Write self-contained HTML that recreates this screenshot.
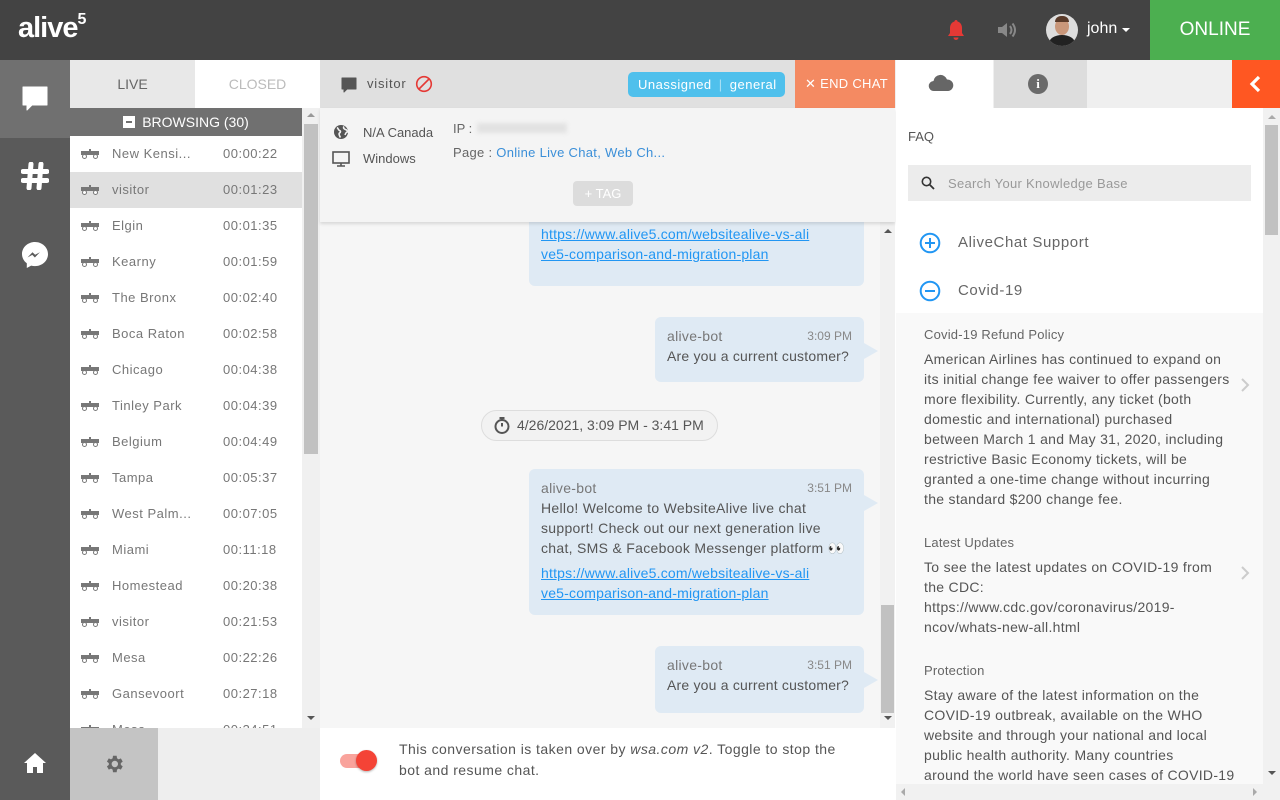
<!DOCTYPE html>
<html><head><meta charset="utf-8"><style>
*{box-sizing:border-box;margin:0;padding:0}
body{width:1280px;height:800px;overflow:hidden;font-family:"Liberation Sans",sans-serif;color:#555;background:#fff;position:relative}
.a{position:absolute}
.row{position:absolute;left:70px;width:232px;height:36px;font-size:13px;color:#777;letter-spacing:.5px;background:#fff;overflow:hidden}
.row .n{position:absolute;left:42px;top:10px}
.row .t{position:absolute;left:153px;top:10px}
.row svg{position:absolute;left:11px;top:13px}
.bub{position:absolute;background:#dfeaf4;border-radius:6px;font-size:14px;color:#555;line-height:20px;letter-spacing:.3px}
.bub:after{content:"";position:absolute;right:-14px;top:26px;border:8px solid transparent;border-left:14px solid #dfeaf4;border-right:0}
.bub .nm{color:#777}
.bub .tm{position:absolute;right:12px;font-size:12px;color:#888;letter-spacing:0}
.lk{color:#2196f3;text-decoration:underline;letter-spacing:.2px}
.faq{font-size:14px;line-height:20px;color:#555;letter-spacing:.3px}
</style></head><body>
<!-- top bar -->
<div class="a" style="left:0;top:0;width:1280px;height:60px;background:#434343"></div>
<div class="a" style="left:18px;top:12px;color:#fff;font-size:29px;font-weight:bold;letter-spacing:-1px">alive<sup style="font-size:16px;position:relative;top:-2px">5</sup></div>
<svg class="a" style="left:946px;top:19px" width="20" height="22" viewBox="0 0 20 22"><path d="M10 1c-1 0-1.5.7-1.5 1.5C5.5 3.3 4 6 4 9v5l-2 3h16l-2-3V9c0-3-1.5-5.7-4.5-6.5C11.5 1.7 11 1 10 1zM7.5 18.5a2.5 2.5 0 0 0 5 0z" fill="#e53935"/></svg>
<svg class="a" style="left:996px;top:20px" width="22" height="20" viewBox="0 0 22 20"><path d="M2 7h4l5-4v14l-5-4H2z" fill="#888"/><path d="M14 6q3 4 0 8M16.5 3.5q5 6.5 0 13" stroke="#888" stroke-width="2" fill="none"/></svg>
<div class="a" style="left:1046px;top:14px;width:32px;height:32px;border-radius:50%;background:#ddd;overflow:hidden"><div class="a" style="left:9px;top:4px;width:14px;height:17px;border-radius:50%;background:#c9977a"></div><div class="a" style="left:9px;top:2px;width:14px;height:6px;border-radius:6px 6px 0 0;background:#5a3b2a"></div><div class="a" style="left:3px;top:21px;width:26px;height:16px;border-radius:50%;background:#222"></div></div>
<div class="a" style="left:1087px;top:20px;color:#fff;font-size:16px">john</div>
<div class="a" style="left:1122px;top:28px;border:4px solid transparent;border-top:4px solid #fff"></div>
<div class="a" style="left:1150px;top:0;width:130px;height:60px;background:#4caf50;color:#fff;font-size:19px;text-align:center;line-height:60px">ONLINE</div>

<!-- left nav -->
<div class="a" style="left:0;top:60px;width:70px;height:740px;background:#5a5a5a"></div>
<div class="a" style="left:0;top:60px;width:70px;height:78px;background:#707070"></div>
<svg class="a" style="left:20px;top:84px" width="30" height="30" viewBox="0 0 30 30"><path d="M3 3h24v18H12l-5 5v-5H3z" fill="#fff" stroke="#fff" stroke-width="1" stroke-linejoin="round"/></svg>
<svg class="a" style="left:21px;top:162px" width="28" height="28" viewBox="0 0 28 28"><path d="M10 2l-2 24M20 2l-2 24M2 9.5h24M2 18.5h24" stroke="#fff" stroke-width="5" stroke-linecap="round"/></svg>
<svg class="a" style="left:20px;top:240px" width="30" height="30" viewBox="0 0 30 30"><path d="M15 2C7.8 2 2 7.4 2 14c0 3.8 1.9 7.1 4.8 9.3V28l4.4-2.4c1.2.3 2.5.5 3.8.5 7.2 0 13-5.4 13-12S22.2 2 15 2z" fill="#fff"/><path d="M7.5 17.5l5-5.3 2.6 2.6 4.8-2.6-5 5.3-2.6-2.6z" fill="#5a5a5a"/></svg>
<svg class="a" style="left:23px;top:752px" width="24" height="22" viewBox="0 0 24 22"><path d="M12 1L1 11h3v10h6v-6h4v6h6V11h3z" fill="#fff"/></svg>

<!-- list panel -->
<div class="a" style="left:70px;top:60px;width:125px;height:48px;background:#e8e8e8;font-size:14px;color:#666;text-align:center;line-height:48px">LIVE</div>
<div class="a" style="left:195px;top:60px;width:125px;height:48px;background:#fff;font-size:14px;color:#bbb;text-align:center;line-height:48px">CLOSED</div>
<div class="a" style="left:70px;top:108px;width:232px;height:28px;background:#707070;color:#fff;font-size:14px;line-height:28px;text-align:center"><span style="display:inline-block;width:12px;height:12px;background:#fff;vertical-align:-1px;margin-right:7px;position:relative"><span style="position:absolute;left:3px;top:5px;width:6px;height:2px;background:#707070"></span></span>BROWSING (30)</div>
<div class="a" style="left:302px;top:108px;width:18px;height:620px;background:#f0f0f0"></div>
<div class="a" style="left:304px;top:124px;width:14px;height:330px;background:#c1c1c1"></div>
<div class="a" style="left:307px;top:113px;border:4px solid transparent;border-bottom:4px solid #999;border-top:0"></div>
<div class="a" style="left:307px;top:716px;border:4px solid transparent;border-top:4px solid #555;border-bottom:0"></div>

<div class="row" style="top:136px"><svg width="18" height="10" viewBox="0 0 18 10"><rect x="0" y="2" width="18" height="4" fill="#777"/><rect x="8" y="0" width="2" height="3" fill="#777"/><circle cx="3.5" cy="7.5" r="2" fill="#fff" stroke="#777"/><circle cx="14.5" cy="7.5" r="2" fill="#fff" stroke="#777"/></svg><span class="n">New Kensi...</span><span class="t">00:00:22</span></div>
<div class="row" style="top:172px;background:#e0e0e0"><svg width="18" height="10" viewBox="0 0 18 10"><rect x="0" y="2" width="18" height="4" fill="#777"/><rect x="8" y="0" width="2" height="3" fill="#777"/><circle cx="3.5" cy="7.5" r="2" fill="#fff" stroke="#777"/><circle cx="14.5" cy="7.5" r="2" fill="#fff" stroke="#777"/></svg><span class="n">visitor</span><span class="t">00:01:23</span></div>
<div class="row" style="top:208px"><svg width="18" height="10" viewBox="0 0 18 10"><rect x="0" y="2" width="18" height="4" fill="#777"/><rect x="8" y="0" width="2" height="3" fill="#777"/><circle cx="3.5" cy="7.5" r="2" fill="#fff" stroke="#777"/><circle cx="14.5" cy="7.5" r="2" fill="#fff" stroke="#777"/></svg><span class="n">Elgin</span><span class="t">00:01:35</span></div>
<div class="row" style="top:244px"><svg width="18" height="10" viewBox="0 0 18 10"><rect x="0" y="2" width="18" height="4" fill="#777"/><rect x="8" y="0" width="2" height="3" fill="#777"/><circle cx="3.5" cy="7.5" r="2" fill="#fff" stroke="#777"/><circle cx="14.5" cy="7.5" r="2" fill="#fff" stroke="#777"/></svg><span class="n">Kearny</span><span class="t">00:01:59</span></div>
<div class="row" style="top:280px"><svg width="18" height="10" viewBox="0 0 18 10"><rect x="0" y="2" width="18" height="4" fill="#777"/><rect x="8" y="0" width="2" height="3" fill="#777"/><circle cx="3.5" cy="7.5" r="2" fill="#fff" stroke="#777"/><circle cx="14.5" cy="7.5" r="2" fill="#fff" stroke="#777"/></svg><span class="n">The Bronx</span><span class="t">00:02:40</span></div>
<div class="row" style="top:316px"><svg width="18" height="10" viewBox="0 0 18 10"><rect x="0" y="2" width="18" height="4" fill="#777"/><rect x="8" y="0" width="2" height="3" fill="#777"/><circle cx="3.5" cy="7.5" r="2" fill="#fff" stroke="#777"/><circle cx="14.5" cy="7.5" r="2" fill="#fff" stroke="#777"/></svg><span class="n">Boca Raton</span><span class="t">00:02:58</span></div>
<div class="row" style="top:352px"><svg width="18" height="10" viewBox="0 0 18 10"><rect x="0" y="2" width="18" height="4" fill="#777"/><rect x="8" y="0" width="2" height="3" fill="#777"/><circle cx="3.5" cy="7.5" r="2" fill="#fff" stroke="#777"/><circle cx="14.5" cy="7.5" r="2" fill="#fff" stroke="#777"/></svg><span class="n">Chicago</span><span class="t">00:04:38</span></div>
<div class="row" style="top:388px"><svg width="18" height="10" viewBox="0 0 18 10"><rect x="0" y="2" width="18" height="4" fill="#777"/><rect x="8" y="0" width="2" height="3" fill="#777"/><circle cx="3.5" cy="7.5" r="2" fill="#fff" stroke="#777"/><circle cx="14.5" cy="7.5" r="2" fill="#fff" stroke="#777"/></svg><span class="n">Tinley Park</span><span class="t">00:04:39</span></div>
<div class="row" style="top:424px"><svg width="18" height="10" viewBox="0 0 18 10"><rect x="0" y="2" width="18" height="4" fill="#777"/><rect x="8" y="0" width="2" height="3" fill="#777"/><circle cx="3.5" cy="7.5" r="2" fill="#fff" stroke="#777"/><circle cx="14.5" cy="7.5" r="2" fill="#fff" stroke="#777"/></svg><span class="n">Belgium</span><span class="t">00:04:49</span></div>
<div class="row" style="top:460px"><svg width="18" height="10" viewBox="0 0 18 10"><rect x="0" y="2" width="18" height="4" fill="#777"/><rect x="8" y="0" width="2" height="3" fill="#777"/><circle cx="3.5" cy="7.5" r="2" fill="#fff" stroke="#777"/><circle cx="14.5" cy="7.5" r="2" fill="#fff" stroke="#777"/></svg><span class="n">Tampa</span><span class="t">00:05:37</span></div>
<div class="row" style="top:496px"><svg width="18" height="10" viewBox="0 0 18 10"><rect x="0" y="2" width="18" height="4" fill="#777"/><rect x="8" y="0" width="2" height="3" fill="#777"/><circle cx="3.5" cy="7.5" r="2" fill="#fff" stroke="#777"/><circle cx="14.5" cy="7.5" r="2" fill="#fff" stroke="#777"/></svg><span class="n">West Palm...</span><span class="t">00:07:05</span></div>
<div class="row" style="top:532px"><svg width="18" height="10" viewBox="0 0 18 10"><rect x="0" y="2" width="18" height="4" fill="#777"/><rect x="8" y="0" width="2" height="3" fill="#777"/><circle cx="3.5" cy="7.5" r="2" fill="#fff" stroke="#777"/><circle cx="14.5" cy="7.5" r="2" fill="#fff" stroke="#777"/></svg><span class="n">Miami</span><span class="t">00:11:18</span></div>
<div class="row" style="top:568px"><svg width="18" height="10" viewBox="0 0 18 10"><rect x="0" y="2" width="18" height="4" fill="#777"/><rect x="8" y="0" width="2" height="3" fill="#777"/><circle cx="3.5" cy="7.5" r="2" fill="#fff" stroke="#777"/><circle cx="14.5" cy="7.5" r="2" fill="#fff" stroke="#777"/></svg><span class="n">Homestead</span><span class="t">00:20:38</span></div>
<div class="row" style="top:604px"><svg width="18" height="10" viewBox="0 0 18 10"><rect x="0" y="2" width="18" height="4" fill="#777"/><rect x="8" y="0" width="2" height="3" fill="#777"/><circle cx="3.5" cy="7.5" r="2" fill="#fff" stroke="#777"/><circle cx="14.5" cy="7.5" r="2" fill="#fff" stroke="#777"/></svg><span class="n">visitor</span><span class="t">00:21:53</span></div>
<div class="row" style="top:640px"><svg width="18" height="10" viewBox="0 0 18 10"><rect x="0" y="2" width="18" height="4" fill="#777"/><rect x="8" y="0" width="2" height="3" fill="#777"/><circle cx="3.5" cy="7.5" r="2" fill="#fff" stroke="#777"/><circle cx="14.5" cy="7.5" r="2" fill="#fff" stroke="#777"/></svg><span class="n">Mesa</span><span class="t">00:22:26</span></div>
<div class="row" style="top:676px"><svg width="18" height="10" viewBox="0 0 18 10"><rect x="0" y="2" width="18" height="4" fill="#777"/><rect x="8" y="0" width="2" height="3" fill="#777"/><circle cx="3.5" cy="7.5" r="2" fill="#fff" stroke="#777"/><circle cx="14.5" cy="7.5" r="2" fill="#fff" stroke="#777"/></svg><span class="n">Gansevoort</span><span class="t">00:27:18</span></div>
<div class="row" style="top:712px;height:16px"><svg width="18" height="10" viewBox="0 0 18 10"><rect x="0" y="2" width="18" height="4" fill="#777"/><rect x="8" y="0" width="2" height="3" fill="#777"/><circle cx="3.5" cy="7.5" r="2" fill="#fff" stroke="#777"/><circle cx="14.5" cy="7.5" r="2" fill="#fff" stroke="#777"/></svg><span class="n">Mesa</span><span class="t">00:34:51</span></div>

<div class="a" style="left:70px;top:728px;width:88px;height:72px;background:#c4c4c4"></div>
<div class="a" style="left:158px;top:728px;width:162px;height:72px;background:#eee"></div>
<svg class="a" style="left:103px;top:753px" width="22" height="22" viewBox="0 0 24 24"><path fill="#666" d="M19.4 13a7.5 7.5 0 0 0 0-2l2.1-1.6-2-3.5-2.5 1a7.6 7.6 0 0 0-1.7-1L14.9 3h-4l-.4 2.9a7.6 7.6 0 0 0-1.7 1l-2.5-1-2 3.5L6.4 11a7.5 7.5 0 0 0 0 2l-2.1 1.6 2 3.5 2.5-1c.5.4 1.1.7 1.7 1l.4 2.9h4l.4-2.9c.6-.3 1.2-.6 1.7-1l2.5 1 2-3.5zM12.9 15.5a3.5 3.5 0 1 1 0-7 3.5 3.5 0 0 1 0 7z"/></svg>

<!-- chat -->
<div class="a" style="left:320px;top:60px;width:575px;height:48px;background:#e0e0e0"></div>
<svg class="a" style="left:341px;top:77px" width="16" height="17" viewBox="0 0 16 17"><path d="M1 1h14v11H6l-3 3v-3H1z" fill="#555" stroke="#555" stroke-linejoin="round"/></svg>
<div class="a" style="left:367px;top:76px;font-size:13px;color:#555;letter-spacing:.8px">visitor</div>
<svg class="a" style="left:415px;top:75px" width="18" height="18" viewBox="0 0 18 18"><circle cx="9" cy="9" r="7.3" fill="none" stroke="#e53935" stroke-width="1.6"/><path d="M4 14L14 4" stroke="#e53935" stroke-width="1.6"/></svg>
<div class="a" style="left:628px;top:72px;width:157px;height:25px;background:#4fc0ec;border-radius:5px;color:#fff;font-size:13px;line-height:25px;padding-left:10px;letter-spacing:.5px">Unassigned <span style="color:#a9e0f5;margin:0 3px">|</span> general</div>
<div class="a" style="left:795px;top:60px;width:100px;height:48px;background:#f48a62;color:#fff;font-size:13px;line-height:48px;padding-left:10px;letter-spacing:.3px">✕ END CHAT</div>

<div class="a" style="left:320px;top:222px;width:560px;height:506px;background:#f6f6f6"></div>
<div class="a" style="left:880px;top:222px;width:15px;height:506px;background:#f1f1f1"></div>
<div class="a" style="left:881px;top:605px;width:13px;height:108px;background:#c1c1c1"></div>
<div class="a" style="left:884px;top:229px;border:4px solid transparent;border-bottom:4px solid #555;border-top:0"></div>
<div class="a" style="left:884px;top:716px;border:4px solid transparent;border-top:4px solid #555;border-bottom:0"></div>

<div class="bub" style="left:529px;top:170px;width:335px;height:116px;padding:9px 12px">
<div style="margin-top:20px">chat, SMS &amp; Facebook Messenger platform 👀</div>
<div class="lk" style="margin-top:5px">https://www.alive5.com/websitealive-vs-ali<br>ve5-comparison-and-migration-plan</div></div>
<div class="bub" style="left:655px;top:317px;width:209px;height:65px;padding:9px 12px"><span class="tm" style="top:9px">3:09 PM</span><div class="nm">alive-bot</div><div style="letter-spacing:.2px">Are you a current customer?</div></div>
<div class="a" style="left:481px;top:410px;width:237px;height:31px;border:1px solid #ddd;border-radius:16px;background:#f2f2f2;font-size:14px;color:#555;line-height:29px;padding-left:35px">4/26/2021, 3:09 PM - 3:41 PM</div>
<svg class="a" style="left:493px;top:416px" width="18" height="19" viewBox="0 0 18 19"><circle cx="9" cy="10.5" r="6.5" fill="none" stroke="#555" stroke-width="2"/><path d="M6.5 2h5M9 2v2.5M9 10.5V7" stroke="#555" stroke-width="2"/></svg>
<div class="bub" style="left:529px;top:469px;width:335px;height:146px;padding:9px 12px"><span class="tm" style="top:9px">3:51 PM</span><div class="nm">alive-bot</div><div>Hello! Welcome to WebsiteAlive live chat<br>support! Check out our next generation live<br>chat, SMS &amp; Facebook Messenger platform 👀</div><div class="lk" style="margin-top:5px">https://www.alive5.com/websitealive-vs-ali<br>ve5-comparison-and-migration-plan</div></div>
<div class="bub" style="left:655px;top:646px;width:209px;height:67px;padding:9px 12px"><span class="tm" style="top:9px">3:51 PM</span><div class="nm">alive-bot</div><div style="letter-spacing:.2px">Are you a current customer?</div></div>

<!-- info panel -->
<div class="a" style="left:320px;top:108px;width:575px;height:114px;background:#f4f4f4;box-shadow:0 2px 3px rgba(0,0,0,.12)"></div>
<svg class="a" style="left:333px;top:124px" width="16" height="16" viewBox="0 0 16 16"><circle cx="8" cy="8" r="7" fill="#555"/><path d="M4 3.5c1.5 1 1 2.5 2.5 3s1 2 0 2.5 0 3 1 4.5M11 2.5c-1 1.5 0 2.5 1.5 3s2 1 2 2.5c-1.5 0-2 1.5-2.5 3" stroke="#f4f4f4" stroke-width="1.6" fill="none"/></svg>
<div class="a" style="left:363px;top:125px;font-size:13px;color:#555">N/A Canada</div>
<svg class="a" style="left:332px;top:151px" width="18" height="16" viewBox="0 0 18 16"><rect x="1" y="1" width="16" height="11" fill="none" stroke="#555" stroke-width="1.6"/><path d="M9 12v3M5 15h8" stroke="#555" stroke-width="1.6"/></svg>
<div class="a" style="left:363px;top:151px;font-size:13px;color:#555">Windows</div>
<div class="a" style="left:453px;top:121px;font-size:13px;color:#666">IP :</div>
<div class="a" style="left:477px;top:123px;width:90px;height:10px;background:#e2e2e2;filter:blur(2px)"></div>
<div class="a" style="left:453px;top:145px;font-size:13px;color:#666;letter-spacing:.3px">Page : <span style="color:#3b8fd8">Online Live Chat, Web Ch...</span></div>
<div class="a" style="left:573px;top:181px;width:60px;height:25px;background:#dcdcdc;border-radius:4px;color:#fff;font-size:13px;text-align:center;line-height:25px">+ TAG</div>

<div class="a" style="left:320px;top:728px;width:575px;height:72px;background:#fff"></div>
<div class="a" style="left:340px;top:754px;width:34px;height:14px;border-radius:7px;background:#f9a39c"></div>
<div class="a" style="left:356px;top:750px;width:21px;height:21px;border-radius:50%;background:#f44336;box-shadow:0 1px 2px rgba(0,0,0,.3)"></div>
<div class="a" style="left:399px;top:739px;width:480px;font-size:14px;line-height:21px;color:#555;letter-spacing:.45px">This conversation is taken over by <i>wsa.com v2</i>. Toggle to stop the<br>bot and resume chat.</div>

<!-- right panel -->
<div class="a" style="left:895px;top:60px;width:385px;height:48px;background:#efefef"></div>
<div class="a" style="left:896px;top:60px;width:97px;height:48px;background:#fff"></div>
<div class="a" style="left:994px;top:60px;width:93px;height:48px;background:#ddd"></div>
<svg class="a" style="left:928px;top:73px" width="26" height="20" viewBox="0 0 26 20"><path d="M6 18a5 5 0 0 1-.5-10A7 7 0 0 1 19 6.5a5.7 5.7 0 0 1 1 11.5z" fill="#666"/></svg>
<div class="a" style="left:1028px;top:74px;width:20px;height:20px;border-radius:50%;background:#6a6a6a;color:#fff;font-size:13px;font-weight:bold;text-align:center;line-height:20px;font-family:'Liberation Serif',serif">i</div>
<div class="a" style="left:1232px;top:60px;width:48px;height:48px;background:#ff5722"></div>
<svg class="a" style="left:1248px;top:75px" width="14" height="18" viewBox="0 0 14 18"><path d="M11 2L4 9l7 7" stroke="#fff" stroke-width="3.2" fill="none"/></svg>

<div class="a" style="left:896px;top:108px;width:367px;height:205px;background:#fff"></div>
<div class="a" style="left:896px;top:313px;width:367px;height:471px;background:#f9f9f9"></div>
<div class="a" style="left:1263px;top:108px;width:17px;height:676px;background:#f1f1f1"></div>
<div class="a" style="left:1265px;top:125px;width:13px;height:110px;background:#c1c1c1"></div>
<div class="a" style="left:1268px;top:115px;border:4px solid transparent;border-bottom:4px solid #aaa;border-top:0"></div>
<div class="a" style="left:1268px;top:771px;border:4px solid transparent;border-top:4px solid #555;border-bottom:0"></div>
<div class="a" style="left:896px;top:784px;width:384px;height:16px;background:#f1f1f1"></div>
<div class="a" style="left:901px;top:788px;border:4px solid transparent;border-right:4px solid #aaa;border-left:0"></div>
<div class="a" style="left:1253px;top:788px;border:4px solid transparent;border-left:4px solid #aaa;border-right:0"></div>

<div class="a" style="left:908px;top:129px;font-size:13px;color:#555">FAQ</div>
<div class="a" style="left:908px;top:165px;width:343px;height:36px;background:#ececec"></div>
<svg class="a" style="left:921px;top:176px" width="14" height="14" viewBox="0 0 14 14"><circle cx="5.5" cy="5.5" r="4.2" fill="none" stroke="#333" stroke-width="1.6"/><path d="M8.5 8.5l4.5 4.5" stroke="#333" stroke-width="1.8"/></svg>
<div class="a" style="left:948px;top:176px;font-size:13px;color:#999;letter-spacing:.3px">Search Your Knowledge Base</div>
<svg class="a" style="left:919px;top:232px" width="22" height="22" viewBox="0 0 22 22"><circle cx="11" cy="11" r="9.3" fill="none" stroke="#2196f3" stroke-width="2"/><path d="M6 11h10M11 6v10" stroke="#2196f3" stroke-width="2"/></svg>
<div class="a" style="left:958px;top:234px;font-size:15px;color:#666;letter-spacing:.6px">AliveChat Support</div>
<svg class="a" style="left:919px;top:280px" width="22" height="22" viewBox="0 0 22 22"><circle cx="11" cy="11" r="9.3" fill="none" stroke="#2196f3" stroke-width="2"/><path d="M6 11h10" stroke="#2196f3" stroke-width="2"/></svg>
<div class="a" style="left:958px;top:282px;font-size:15px;color:#666;letter-spacing:.6px">Covid-19</div>

<div class="a" style="left:924px;top:327px;font-size:13px;color:#666;letter-spacing:.2px">Covid-19 Refund Policy</div>
<div class="a faq" style="left:924px;top:349px;width:320px">American Airlines has continued to expand on<br>its initial change fee waiver to offer passengers<br>more flexibility. Currently, any ticket (both<br>domestic and international) purchased<br>between March 1 and May 31, 2020, including<br>restrictive Basic Economy tickets, will be<br>granted a one-time change without incurring<br>the standard $200 change fee.</div>
<svg class="a" style="left:1240px;top:377px" width="10" height="16" viewBox="0 0 10 16"><path d="M2 2l6 6-6 6" stroke="#ccc" stroke-width="2" fill="none"/></svg>
<div class="a" style="left:924px;top:535px;font-size:13px;color:#666;letter-spacing:.2px">Latest Updates</div>
<div class="a faq" style="left:924px;top:557px;width:310px">To see the latest updates on COVID-19 from<br>the CDC:<br>https://www.cdc.gov/coronavirus/2019-<br>ncov/whats-new-all.html</div>
<svg class="a" style="left:1240px;top:565px" width="10" height="16" viewBox="0 0 10 16"><path d="M2 2l6 6-6 6" stroke="#ccc" stroke-width="2" fill="none"/></svg>
<div class="a" style="left:924px;top:663px;font-size:13px;color:#666;letter-spacing:.2px">Protection</div>
<div class="a faq" style="left:924px;top:685px;width:320px;height:98px;overflow:hidden">Stay aware of the latest information on the<br>COVID-19 outbreak, available on the WHO<br>website and through your national and local<br>public health authority. Many countries<br>around the world have seen cases of COVID-19</div>
</body></html>
